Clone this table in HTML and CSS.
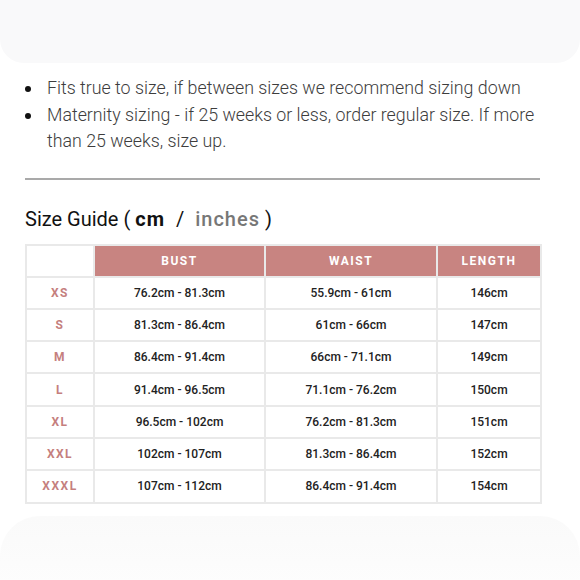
FILE: index.html
```html
<!DOCTYPE html>
<html>
<head>
<meta charset="utf-8">
<link rel="stylesheet" href="styles.css">
</head>
<body>
<div class="band band-top"></div>
<main class="content">
  <ul class="notes">
    <li>Fits true to size, if between sizes we recommend sizing down</li>
    <li>Maternity sizing - if 25 weeks or less, order regular size. If more than 25 weeks, size up.</li>
  </ul>
  <hr class="rule">
  <h2 class="guide-title">Size Guide ( <span class="unit active">cm</span> <span class="slash">/</span> <span class="unit">inches</span> )</h2>
  <table class="sizes">
    <colgroup>
      <col class="c-size"><col class="c-bust"><col class="c-waist"><col class="c-length">
    </colgroup>
    <thead>
      <tr><th class="blank"></th><th>BUST</th><th>WAIST</th><th>LENGTH</th></tr>
    </thead>
    <tbody>
      <tr><td class="size">XS</td><td>76.2cm - 81.3cm</td><td>55.9cm - 61cm</td><td>146cm</td></tr>
      <tr><td class="size">S</td><td>81.3cm - 86.4cm</td><td>61cm - 66cm</td><td>147cm</td></tr>
      <tr><td class="size">M</td><td>86.4cm - 91.4cm</td><td>66cm - 71.1cm</td><td>149cm</td></tr>
      <tr><td class="size">L</td><td>91.4cm - 96.5cm</td><td>71.1cm - 76.2cm</td><td>150cm</td></tr>
      <tr><td class="size">XL</td><td>96.5cm - 102cm</td><td>76.2cm - 81.3cm</td><td>151cm</td></tr>
      <tr><td class="size">XXL</td><td>102cm - 107cm</td><td>81.3cm - 86.4cm</td><td>152cm</td></tr>
      <tr><td class="size">XXXL</td><td>107cm - 112cm</td><td>86.4cm - 91.4cm</td><td>154cm</td></tr>
    </tbody>
  </table>
</main>
<div class="band band-bottom"></div>
</body>
</html>
```
FILE: styles.css
```css
html, body {
  margin: 0;
  padding: 0;
  background: #ffffff;
  font-family: Roboto, "Liberation Sans", sans-serif;
  width: 580px;
  height: 580px;
  overflow: hidden;
}
.band {
  background: #f9f9fa;
}
.band-top {
  height: 63px;
  border-radius: 0 0 24px 24px;
}
.band-bottom {
  height: 70px;
  margin: 12px 0 0 0;
  border-radius: 40px 40px 0 0;
  background: linear-gradient(to bottom, #fafafa, #fdfdfd);
}
.content {
  padding: 0 18px 0 25px;
}
.notes {
  list-style: none;
  margin: 12px 0 0 0;
  padding: 0;
  font-weight: 300;
  font-size: 17.8px;
  line-height: 26.5px;
  color: #3d3d3d;
}
.notes li {
  position: relative;
  padding-left: 22px;
}
.notes li::before {
  content: "";
  position: absolute;
  left: 0;
  top: 11px;
  width: 6px;
  height: 6px;
  border-radius: 50%;
  background: #111;
}
.rule {
  border: 0;
  height: 2px;
  background: #a9a9a9;
  margin: 23px 0 0 0;
  width: 515px;
}
.guide-title {
  margin: 26px 0 0 0;
  font-size: 20px;
  font-weight: 400;
  color: #111;
  line-height: 26px;
}
.unit {
  letter-spacing: 1px;
}
.unit.active {
  font-weight: 700;
  color: #111;
}
.slash {
  padding: 0 6px;
}
.unit:not(.active) {
  color: #777;
  font-weight: 500;
}
.sizes {
  margin-top: 12px;
  border-collapse: collapse;
  width: 515px;
  table-layout: fixed;
  font-size: 12px;
}
.c-size { width: 68px; }
.c-bust { width: 171px; }
.c-waist { width: 172px; }
.c-length { width: 104px; }
.sizes th, .sizes td {
  border: 2px solid #e9e9e9;
  text-align: center;
  padding: 0;
  height: 30.3px;
}
.sizes th {
  background: #c88481;
  color: #ffffff;
  font-weight: 700;
  letter-spacing: 1.5px;
  font-size: 12px;
  height: 30px;
}
.sizes th.blank {
  background: #ffffff;
}
.sizes td {
  color: #222;
  font-weight: 500;
}
.sizes td.size {
  color: #c57f7e;
  font-weight: 700;
  letter-spacing: 1.5px;
}
```
